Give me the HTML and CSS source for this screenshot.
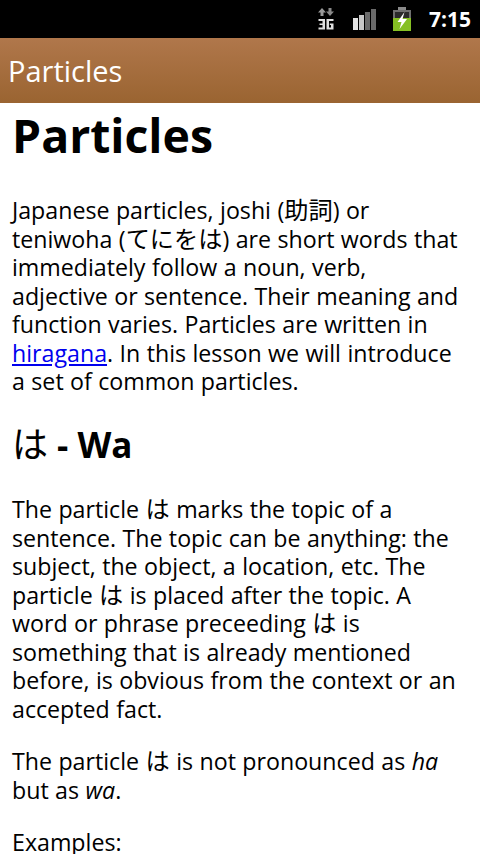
FILE: index.html
```html
<!DOCTYPE html>
<html lang="en">

<head>
  <meta charset="UTF-8">
  <title>Particles</title>
  <link rel="stylesheet" href="styles.css">
</head>

<body>
  <div class="statusbar">
    <svg class="icon-3g" width="16" height="22" viewBox="0 0 16 22">
      <path d="M4 0 L0 4.500 H2.500 V8 H5.500 V4.500 H8 Z" fill="#9a9a9a"/>
      <path d="M12 8 L16 3.500 H13.500 V0 H10.500 V3.500 H8 Z" fill="#8a8a8a"/>
      <path d="M0.500 11 H7 V21.500 H0.500 V19.500 H4.500 V17 H1.500 V15.500 H4.500 V13 H0.500 Z" fill="#e0e0e0"/>
      <path d="M8.500 11 H15.500 V13 H11 V19.500 H13 V17 H11.800 V15.500 H15.500 V21.500 H8.500 Z" fill="#e0e0e0"/>
    </svg>
    <svg class="icon-signal" width="23" height="21" viewBox="0 0 23 21">
      <rect x="0" y="9" width="5" height="12" fill="#e2e2e2"/>
      <rect x="6" y="6" width="5" height="15" fill="#c8c8c8"/>
      <rect x="12" y="3" width="5" height="18" fill="#6a6a6a"/>
      <rect x="18" y="0" width="5" height="21" fill="#6a6a6a"/>
    </svg>
    <svg class="icon-battery" width="18" height="24" viewBox="0 0 18 24">
      <rect x="5" y="0" width="8" height="3" fill="#8a8a8a"/>
      <rect x="0" y="3" width="18" height="9" fill="#6f6f6f"/>
      <rect x="2" y="5" width="14" height="7" fill="#2a2a2a"/>
      <rect x="0" y="11" width="18" height="13" fill="#86c024"/>
      <path d="M11.500 5 L4.500 15 H8.500 L6.500 22 L14 12 H9.500 Z" fill="#fff"/>
    </svg>
    <span class="clock">7:15</span>
  </div>

  <div class="titlebar">Particles</div>

  <div class="content">
    <h1>Particles</h1>
    <p>Japanese particles, joshi (<span class="ja">助詞</span>) or teniwoha (<span class="ja">てにをは</span>) are short words that immediately follow a noun, verb, adjective or sentence. Their meaning and function varies. Particles are written in <a href="#">hiragana</a>. In this lesson we will introduce a set of common particles.</p>
    <h2><span class="ja-head">は</span> - Wa</h2>
    <p>The particle <span class="ja">は</span> marks the topic of a sentence. The topic can be anything: the subject, the object, a location, etc. The particle <span class="ja">は</span> is placed after the topic. A word or phrase preceeding <span class="ja">は</span> is something that is already mentioned before, is obvious from the context or an accepted fact.</p>
    <p>The particle <span class="ja">は</span> is not pronounced as <em>ha</em> but as <em>wa</em>.</p>
    <p>Examples:</p>
  </div>
</body>

</html>
```

FILE: styles.css
```css
html,
body {
  height: 100%;
}

body {
  margin: 0;
  background: #FFF;
  color: #000;
  font-family: "Open Sans", "Noto Sans CJK JP", sans-serif;
  overflow: hidden;
}

.statusbar {
  height: 38px;
  background: #000;
  display: flex;
  align-items: flex-start;
  justify-content: flex-end;
  padding-right: 9px;
}

.icon-3g {
  margin: 8px 19px 0 0;
}

.icon-signal {
  margin: 9px 17px 0 0;
}

.icon-battery {
  margin: 7px 18px 0 0;
}

.clock {
  color: #FFF;
  font-size: 21px;
  font-weight: bold;
  line-height: 38px;
}

.titlebar {
  height: 65px;
  line-height: 65px;
  padding-left: 8px;
  color: #FFF;
  font-size: 29px;
  background: linear-gradient(#b0774b, #9a6431);
}

.content {
  padding: 0 18px 0 12px;
}

h1 {
  font-size: 46.400px;
  line-height: 64px;
  margin: 0 0 29px;
}

h2 {
  font-size: 35px;
  line-height: 48px;
  padding-top: 1px;
  margin: 0 0 26.500px;
}

.ja-head {
  font-size: 36px;
  font-weight: normal;
}

p {
  font-size: 23.200px;
  word-spacing: 0.400px;
  line-height: 28.500px;
  margin: 0 0 24px;
}

.ja {
  font-size: 24.200px;
  line-height: 1;
}
```
